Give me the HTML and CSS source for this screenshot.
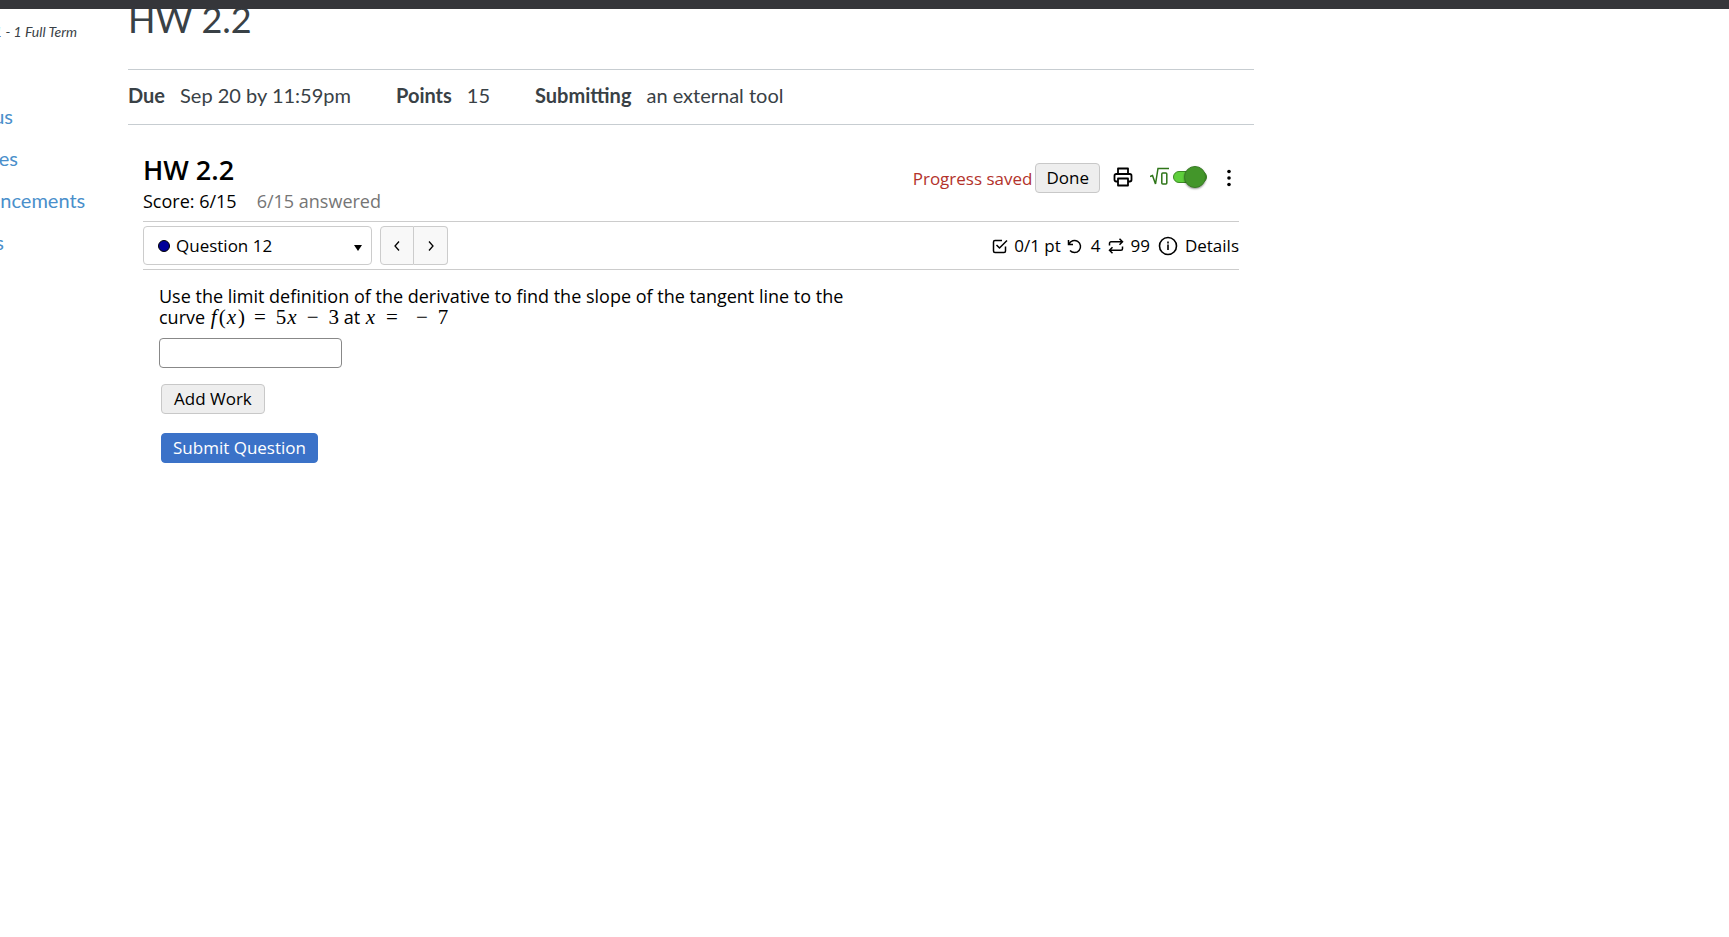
FILE: index.html
```
<!DOCTYPE html>
<html lang="en">
<head>
<meta charset="utf-8">
<title>HW 2.2</title>
<link rel="stylesheet" href="styles.css">
</head>
<body>
<div class="topbar"></div>
<div class="layout">
  <aside class="sidebar">
    <p class="term">1 - 1 Full Term</p>
    <nav class="course-nav">
      <a href="#">Home</a>
      <a href="#">Syllabus</a>
      <a href="#">Modules</a>
      <a href="#">Announcements</a>
      <a href="#">Grades</a>
    </nav>
  </aside>
  <main class="content">
    <h1 class="page-title">HW 2.2</h1>
    <dl class="details">
      <div class="detail"><dt>Due</dt><dd>Sep 20 by 11:59pm</dd></div>
      <div class="detail"><dt>Points</dt><dd>15</dd></div>
      <div class="detail"><dt>Submitting</dt><dd>an external tool</dd></div>
    </dl>
    <section class="tool">
      <header class="tool-header">
        <div>
          <h2 class="tool-title">HW 2.2</h2>
          <p class="score"><span>Score: 6/15</span><span class="answered">6/15 answered</span></p>
        </div>
        <div class="actions">
          <span class="saved">Progress saved</span>
          <button class="btn done" type="button">Done</button>
          <button class="icon-btn print" type="button" aria-label="Print">
            <svg width="20" height="20" viewBox="0 0 20 20" fill="none" stroke="#000" stroke-width="1.8" stroke-linejoin="round"><path d="M5 7V1.5h10V7M5 14.5H3.2A1.7 1.7 0 0 1 1.5 12.800V8.700A1.700 1.700 0 0 1 3.200 7h13.600a1.700 1.700 0 0 1 1.700 1.700v4.100a1.700 1.700 0 0 1-1.700 1.700H15M5 11.500h10v7H5z"/></svg>
          </button>
          <label class="math-toggle">
            <svg width="19" height="19" viewBox="0 0 19 19" fill="none" stroke="#2e7518" stroke-width="1.500"><path d="M0 9.500l2.500-1 3 8.500L8 1.500h11"/><rect x="11.800" y="6" width="5" height="11" rx="1"/></svg>
            <input type="checkbox" class="switch" aria-label="Equation editor" checked>
          </label>
          <button class="icon-btn" type="button" aria-label="More options">
            <svg width="6" height="18" viewBox="0 0 6 18"><circle cx="3" cy="2.500" r="1.800"/><circle cx="3" cy="9" r="1.800"/><circle cx="3" cy="15.500" r="1.800"/></svg>
          </button>
        </div>
      </header>
      <div class="question-bar">
        <div class="picker">
          <span class="dot"></span>
          <select class="question-select" aria-label="Question"><option>Question 12</option></select>
          <svg class="caret" width="8" height="7" viewBox="0 0 8 7"><path d="M0 1h8L4 7z"/></svg>
        </div>
        <div class="pager">
          <button type="button" aria-label="Previous question"><svg width="6" height="10" viewBox="0 0 6 10" fill="none" stroke="#000" stroke-width="1.300"><path d="M5 .5L1 5l4 4.500"/></svg></button>
          <button type="button" aria-label="Next question"><svg width="6" height="10" viewBox="0 0 6 10" fill="none" stroke="#000" stroke-width="1.300"><path d="M1 .5L5 5 1 9.500"/></svg></button>
        </div>
        <div class="stats">
          <svg width="16" height="16" viewBox="0 0 16 16" fill="none" stroke="#000" stroke-width="1.500" stroke-linejoin="round"><path d="M10 2.500H3A1.500 1.500 0 0 0 1.500 4v9A1.500 1.500 0 0 0 3 14.500h9a1.500 1.500 0 0 0 1.500-1.500V8.500M4.500 7l3 3L15 2.500"/></svg>
          <span>0/1 pt</span>
          <svg width="16" height="16" viewBox="0 0 16 16" fill="none" stroke="#000" stroke-width="1.500"><path d="M1.500 2v4.500H6M2 6.200a6 6 0 1 1 1 6.300"/></svg>
          <span class="tries">4</span>
          <svg width="16" height="16" viewBox="0 0 16 16" fill="none" stroke="#000" stroke-width="1.500"><path d="M11.500.800L14.500 3.800l-3 3M1.500 7.500V5.300a1.500 1.500 0 0 1 1.500-1.500h11.500M4.500 9.200l-3 3 3 3M14.500 8.500v2.200a1.500 1.500 0 0 1-1.500 1.500H1.500"/></svg>
          <span>99</span>
          <a class="details-link" href="#">
            <svg width="20" height="20" viewBox="0 0 20 20" fill="none" stroke="#000" stroke-width="1.600"><circle cx="10" cy="10" r="8.500"/><path d="M10 8.500v5.500M10 5.500v2"/></svg>
            Details
          </a>
        </div>
      </div>
      <form class="question">
        <p class="prompt">Use the limit definition of the derivative to find the slope of the tangent line to the<br>curve <span class="math"><i>f</i>(<i>x</i>)<span class="rel">=</span>5<i>x</i><span class="op">−</span>3</span> at <span class="math"><i>x</i><span class="rel">=</span><span class="op">−</span>7</span></p>
        <input class="answer" type="text" aria-label="Answer">
        <button class="btn add" type="button">Add Work</button>
        <button class="btn submit" type="button">Submit Question</button>
      </form>
    </section>
  </main>
</div>
</body>
</html>
```
FILE: styles.css
```
* { box-sizing: border-box; }
body {
  margin: 0;
  background: #fff;
  color: #394146;
  font-family: Lato, sans-serif;
  font-size: 20px;
  overflow-x: hidden;
}
h1, h2, p, dl, dd { margin: 0; }
button, input, select { font: inherit; color: inherit; margin: 0; }
svg { display: block; flex: none; }
a { text-decoration: none; }
.topbar { height: 9px; background: #35363a; }
.layout { display: flex; }
.sidebar { width: 128px; flex: none; overflow: hidden; padding-top: 13px; }
.term { font-size: 14px; line-height: 20px; font-style: italic; margin-left: -6px; white-space: nowrap; }
.course-nav { display: flex; flex-direction: column; margin: 11px 0 0 -58px; }
.course-nav a { color: #4a8fcb; line-height: 42px; white-space: nowrap; }
.content { flex: 1; max-width: 1126px; overflow: hidden; }
.page-title { font-size: 36px; line-height: 40px; font-weight: 400; margin-top: -10px; }
.details {
  display: flex;
  gap: 45px;
  margin-top: 30px;
  padding: 10px 0 14px;
  line-height: 30px;
  border: solid #c7cdd1;
  border-width: 1px 0;
}
.detail { display: flex; gap: 15px; }
.detail dt { font-weight: 700; }
.tool {
  padding: 26px 15px 0;
  font-family: "Open Sans", sans-serif;
  font-size: 17px;
  color: #000;
}
.tool-header { display: flex; justify-content: space-between; align-items: flex-start; padding-bottom: 8px; }
.tool-title { font-size: 27px; line-height: 38px; font-weight: 600; }
.score { display: flex; gap: 20px; font-size: 18px; line-height: 24px; }
.answered { color: #757575; }
.actions { display: flex; align-items: center; padding: 12px 7px 0 0; }
.saved { color: #b3322b; margin-right: 3px; }
.btn {
  height: 30px;
  padding: 0 12px;
  border: 1px solid #c8c8c8;
  border-radius: 4px;
  background: #eee;
  color: #000;
  line-height: 20px;
}
.done { padding: 0 10px; }
.icon-btn { border: 0; padding: 0; background: none; }
.print { margin: 0 17px 3px 13px; }
.math-toggle { display: flex; align-items: center; gap: 4px; margin: 0 19px 3px 0; }
.switch {
  appearance: none;
  display: flex;
  align-items: center;
  justify-content: flex-end;
  width: 34px;
  height: 12px;
  border: 1px solid #3c8a24;
  border-radius: 6px;
  background: #5fcf3c;
}
.switch::before {
  content: "";
  flex: none;
  width: 20px;
  height: 20px;
  border: 1px solid #3a7d26;
  border-radius: 50%;
  background: #43962a;
  box-shadow: 0 1px 2px #0006;
}
.question-bar {
  display: flex;
  align-items: center;
  padding: 4px 0;
  border: solid #ccc;
  border-width: 1px 0;
}
.picker { display: grid; grid-template-columns: 15px 12px 1fr 8px 10px; align-items: center; width: 229px; }
.picker > * { grid-row: 1; }
.question-select {
  grid-column: 1 / -1;
  appearance: none;
  height: 39px;
  padding: 0 30px 0 32px;
  border: 1px solid #ccc;
  border-radius: 4px;
  background: transparent;
}
.dot { grid-column: 2; width: 12px; height: 12px; border: 1px solid #000; border-radius: 50%; background: #009; }
.caret { grid-column: 4; margin-top: 3px; }
.pager { display: flex; margin-left: 8px; }
.pager button {
  display: grid;
  place-items: center;
  width: 34px;
  height: 39px;
  padding: 0;
  border: 1px solid #ccc;
  border-radius: 4px 0 0 4px;
  background: #f8f8f8;
}
.pager button + button { border-left: 0; border-radius: 0 4px 4px 0; }
.stats { display: flex; align-items: center; gap: 6px; margin-left: auto; }
.tries { margin: 0 2px; }
.details-link { display: flex; align-items: center; gap: 7px; margin-left: 2px; color: #000; }
.question { display: flex; flex-direction: column; align-items: flex-start; padding: 16px; }
.prompt { font-size: 18px; line-height: 21px; }
.math { font-family: "Liberation Serif", serif; font-size: 21px; line-height: 20px; }
.math i { margin: 0 2px 0 1px; }
.rel { margin: 0 10px 0 9px; }
.op { margin: 0 10px 0 8px; }
.answer { width: 183px; height: 30px; margin-top: 10px; padding: 0 6px; border: 1px solid #888; border-radius: 4px; background: #fff; }
.add { margin: 16px 0 0 2px; }
.submit { margin: 19px 0 0 2px; padding: 0 11px; border-color: #3b72c8; background: #3b72c8; color: #fff; font-weight: 500; }
```
